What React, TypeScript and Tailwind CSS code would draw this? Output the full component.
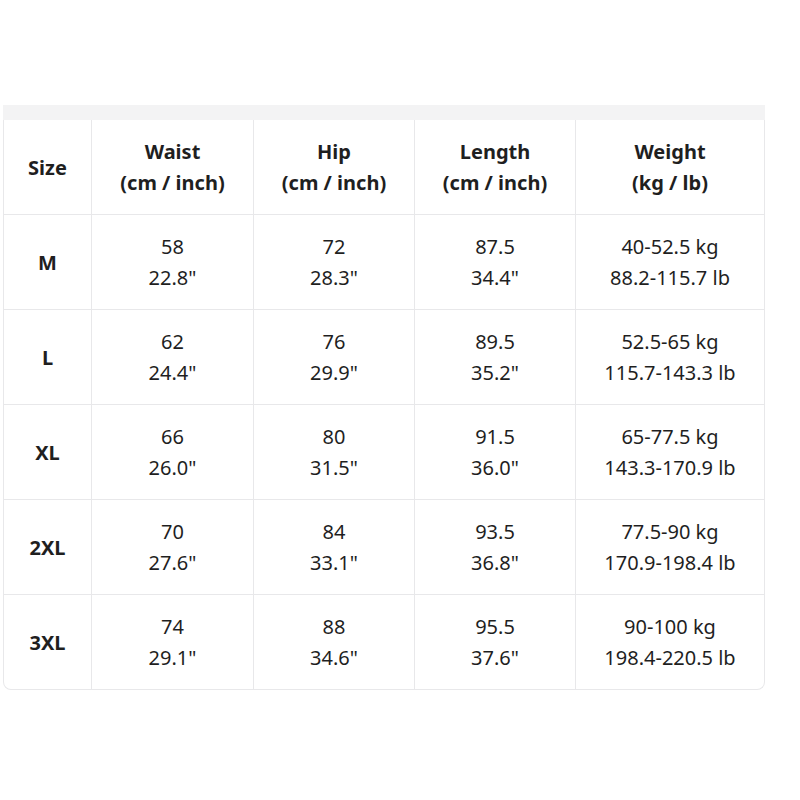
const rows = [
  { size: "M", waist: ["58", "22.8\""], hip: ["72", "28.3\""], length: ["87.5", "34.4\""], weight: ["40-52.5 kg", "88.2-115.7 lb"] },
  { size: "L", waist: ["62", "24.4\""], hip: ["76", "29.9\""], length: ["89.5", "35.2\""], weight: ["52.5-65 kg", "115.7-143.3 lb"] },
  { size: "XL", waist: ["66", "26.0\""], hip: ["80", "31.5\""], length: ["91.5", "36.0\""], weight: ["65-77.5 kg", "143.3-170.9 lb"] },
  { size: "2XL", waist: ["70", "27.6\""], hip: ["84", "33.1\""], length: ["93.5", "36.8\""], weight: ["77.5-90 kg", "170.9-198.4 lb"] },
  { size: "3XL", waist: ["74", "29.1\""], hip: ["88", "34.6\""], length: ["95.5", "37.6\""], weight: ["90-100 kg", "198.4-220.5 lb"] },
];

const cols = "grid grid-cols-[87px_162px_161px_161px_189px]";
const cell = "flex flex-col items-center justify-center border-l border-[#e8e8ea] first:border-l-0 h-[94px] leading-[31px]";

export default function App() {
  return (
    <div className="w-[800px] h-[800px] bg-white pt-[105px] pl-[3px] text-[20px] text-[#1f1f1f] font-['Noto_Sans',sans-serif]">
      {/* header strip */}
      <div className="w-[762px] h-[15px] bg-[#f3f3f4]" />
      <div className="w-[762px] border border-t-0 border-[#e8e8ea] rounded-b-lg">
        <div className={`${cols} font-bold`}>
          <div className={cell}>Size</div>
          <div className={cell}><span>Waist</span><span>(cm / inch)</span></div>
          <div className={cell}><span>Hip</span><span>(cm / inch)</span></div>
          <div className={cell}><span>Length</span><span>(cm / inch)</span></div>
          <div className={cell}><span>Weight</span><span>(kg / lb)</span></div>
        </div>
        {rows.map((r) => (
          <div key={r.size} className={`${cols} border-t border-[#e8e8ea]`}>
            <div className={`${cell} font-bold`}>{r.size}</div>
            {[r.waist, r.hip, r.length, r.weight].map((v, i) => (
              <div key={i} className={cell}><span>{v[0]}</span><span>{v[1]}</span></div>
            ))}
          </div>
        ))}
      </div>
    </div>
  );
}
